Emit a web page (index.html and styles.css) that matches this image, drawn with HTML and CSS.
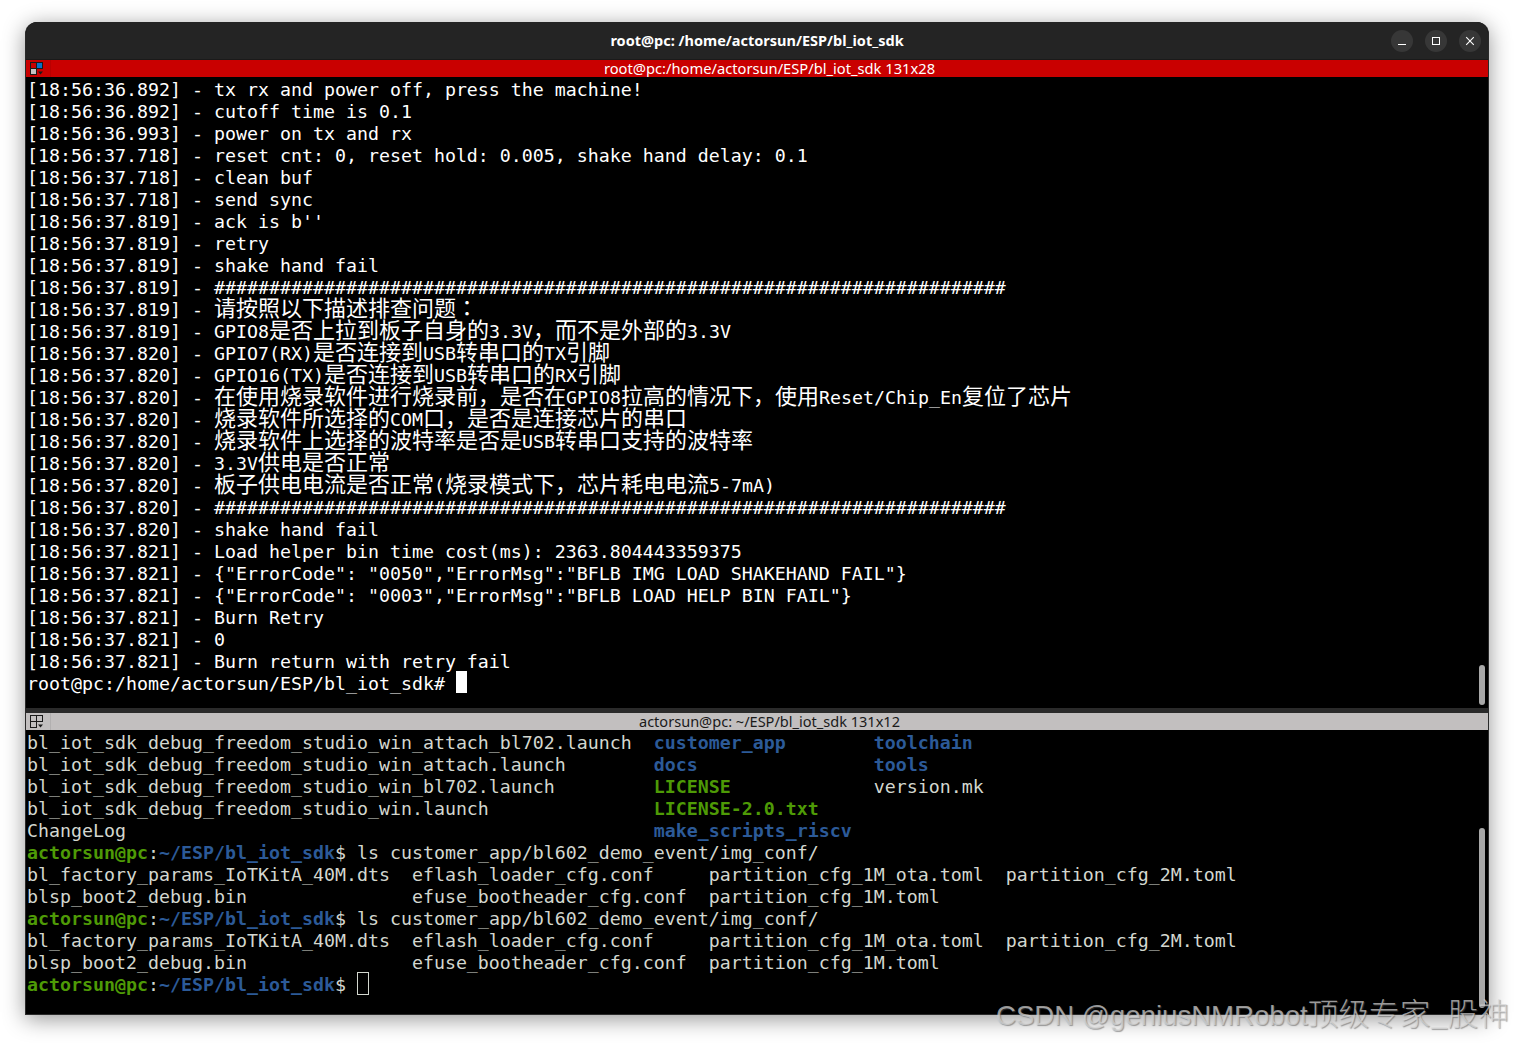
FILE: index.html
```html
<!DOCTYPE html>
<html lang="en">
<head>
<meta charset="utf-8">
<title>root@pc: /home/actorsun/ESP/bl_iot_sdk</title>
<link rel="stylesheet" href="styles.css">
</head>
<body>
<main class="window">
  <header class="titlebar">
    <span></span>
    <h1 class="title">root@pc: /home/actorsun/ESP/bl_iot_sdk</h1>
    <div class="controls">
      <button class="ctl" aria-label="Minimize"><svg width="10" height="10" viewBox="0 0 10 10"><path d="M1 8.5h8" stroke="#fff" stroke-width="1"/></svg></button>
      <button class="ctl" aria-label="Maximize"><svg width="10" height="10" viewBox="0 0 10 10"><rect x="1.5" y="1.5" width="7" height="7" fill="none" stroke="#fff" stroke-width="1"/></svg></button>
      <button class="ctl" aria-label="Close"><svg width="10" height="10" viewBox="0 0 10 10"><path d="M1.2 1.2l7.6 7.6M8.8 1.2l-7.6 7.6" stroke="#fff" stroke-width="1.1"/></svg></button>
    </div>
  </header>

  <div class="panebar panebar-active">
    <span class="pane-icon"><svg width="14" height="14" viewBox="0 0 14 14"><rect x=".5" y=".5" width="6" height="6" fill="#c90000" stroke="#1a1a1a"/><rect x="6.5" y=".5" width="6" height="6" fill="#0a70c8" stroke="#1a1a1a"/><rect x=".5" y="6.5" width="6" height="6" fill="#c4c2c2" stroke="#1a1a1a"/><path d="M8 9.5h5l-2.5 3z" fill="#1a1a1a"/></svg></span>
    <span class="pane-title">root@pc:/home/actorsun/ESP/bl_iot_sdk 131x28</span>
  </div>
  <section class="pane pane-top">
    <div class="line">[18:56:36.892] - tx rx and power off, press the machine!</div>
    <div class="line">[18:56:36.892] - cutoff time is 0.1</div>
    <div class="line">[18:56:36.993] - power on tx and rx</div>
    <div class="line">[18:56:37.718] - reset cnt: 0, reset hold: 0.005, shake hand delay: 0.1</div>
    <div class="line">[18:56:37.718] - clean buf</div>
    <div class="line">[18:56:37.718] - send sync</div>
    <div class="line">[18:56:37.819] - ack is b''</div>
    <div class="line">[18:56:37.819] - retry</div>
    <div class="line">[18:56:37.819] - shake hand fail</div>
    <div class="line">[18:56:37.819] - ########################################################################</div>
    <div class="line">[18:56:37.819] - <span class="cjk">请按照以下描述排查问题</span><span class="cjk cjk-tc">：</span></div>
    <div class="line">[18:56:37.819] - GPIO8<span class="cjk">是否上拉到板子自身的</span>3.3V<span class="cjk">，而不是外部的</span>3.3V</div>
    <div class="line">[18:56:37.820] - GPIO7(RX)<span class="cjk">是否连接到</span>USB<span class="cjk">转串口的</span>TX<span class="cjk">引脚</span></div>
    <div class="line">[18:56:37.820] - GPIO16(TX)<span class="cjk">是否连接到</span>USB<span class="cjk">转串口的</span>RX<span class="cjk">引脚</span></div>
    <div class="line">[18:56:37.820] - <span class="cjk">在使用烧录软件进行烧录前，是否在</span>GPIO8<span class="cjk">拉高的情况下，使用</span>Reset/Chip_En<span class="cjk">复位了芯片</span></div>
    <div class="line">[18:56:37.820] - <span class="cjk">烧录软件所选择的</span>COM<span class="cjk">口，是否是连接芯片的串口</span></div>
    <div class="line">[18:56:37.820] - <span class="cjk">烧录软件上选择的波特率是否是</span>USB<span class="cjk">转串口支持的波特率</span></div>
    <div class="line">[18:56:37.820] - 3.3V<span class="cjk">供电是否正常</span></div>
    <div class="line">[18:56:37.820] - <span class="cjk">板子供电电流是否正常</span>(<span class="cjk">烧录模式下，芯片耗电电流</span>5-7mA)</div>
    <div class="line">[18:56:37.820] - ########################################################################</div>
    <div class="line">[18:56:37.820] - shake hand fail</div>
    <div class="line">[18:56:37.821] - Load helper bin time cost(ms): 2363.804443359375</div>
    <div class="line">[18:56:37.821] - {"ErrorCode": "0050","ErrorMsg":"BFLB IMG LOAD SHAKEHAND FAIL"}</div>
    <div class="line">[18:56:37.821] - {"ErrorCode": "0003","ErrorMsg":"BFLB LOAD HELP BIN FAIL"}</div>
    <div class="line">[18:56:37.821] - Burn Retry</div>
    <div class="line">[18:56:37.821] - 0</div>
    <div class="line">[18:56:37.821] - Burn return with retry fail</div>
    <div class="line">root@pc:/home/actorsun/ESP/bl_iot_sdk# <span class="cursor-solid"></span></div>
    <div class="thumb thumb-top"></div>
  </section>
  <div class="divider"></div>

  <div class="panebar panebar-idle">
    <span class="pane-icon"><svg width="14" height="14" viewBox="0 0 14 14"><rect x=".5" y=".5" width="6" height="6" fill="none" stroke="#1a1a1a"/><rect x="6.5" y=".5" width="6" height="6" fill="none" stroke="#1a1a1a"/><rect x=".5" y="6.5" width="6" height="6" fill="none" stroke="#1a1a1a"/><path d="M8 9.5h5l-2.5 3z" fill="#1a1a1a"/></svg></span>
    <span class="pane-title pane-title-idle">actorsun@pc: ~/ESP/bl_iot_sdk 131x12</span>
  </div>
  <section class="pane pane-bottom">
    <div class="line">bl_iot_sdk_debug_freedom_studio_win_attach_bl702.launch  <b class="dir">customer_app</b>        <b class="dir">toolchain</b></div>
    <div class="line">bl_iot_sdk_debug_freedom_studio_win_attach.launch        <b class="dir">docs</b>                <b class="dir">tools</b></div>
    <div class="line">bl_iot_sdk_debug_freedom_studio_win_bl702.launch         <b class="exe">LICENSE</b>             version.mk</div>
    <div class="line">bl_iot_sdk_debug_freedom_studio_win.launch               <b class="exe">LICENSE-2.0.txt</b></div>
    <div class="line">ChangeLog                                                <b class="dir">make_scripts_riscv</b></div>
    <div class="line"><b class="exe">actorsun@pc</b>:<b class="dir">~/ESP/bl_iot_sdk</b>$ ls customer_app/bl602_demo_event/img_conf/</div>
    <div class="line">bl_factory_params_IoTKitA_40M.dts  eflash_loader_cfg.conf     partition_cfg_1M_ota.toml  partition_cfg_2M.toml</div>
    <div class="line">blsp_boot2_debug.bin               efuse_bootheader_cfg.conf  partition_cfg_1M.toml</div>
    <div class="line"><b class="exe">actorsun@pc</b>:<b class="dir">~/ESP/bl_iot_sdk</b>$ ls customer_app/bl602_demo_event/img_conf/</div>
    <div class="line">bl_factory_params_IoTKitA_40M.dts  eflash_loader_cfg.conf     partition_cfg_1M_ota.toml  partition_cfg_2M.toml</div>
    <div class="line">blsp_boot2_debug.bin               efuse_bootheader_cfg.conf  partition_cfg_1M.toml</div>
    <div class="line"><b class="exe">actorsun@pc</b>:<b class="dir">~/ESP/bl_iot_sdk</b>$ <span class="cursor-hollow"></span></div>
    <div class="thumb thumb-bottom"></div>
  </section>
</main>
<div class="watermark">CSDN @geniusNMRobot<span class="watermark-cjk">顶级专家_股神</span></div>
</body>
</html>
```
FILE: styles.css
```css
* { box-sizing: border-box; }
html, body { margin: 0; height: 100%; background: #fff; overflow: hidden; }
body { padding: 22px 25px 0; position: relative; }

.window {
  width: 1464px;
  height: 993px;
  display: flex;
  flex-direction: column;
  background: #000;
  border: 1px solid #2a2a2a;
  border-top: 0;
  border-radius: 12px 12px 0 0;
  box-shadow: 0 4px 22px rgba(0, 0, 0, .42);
  overflow: hidden;
}

.titlebar {
  height: 38px;
  flex: none;
  display: grid;
  grid-template-columns: 1fr auto 1fr;
  align-items: center;
  background: #242424;
  border-bottom: 1px solid #1a1a1a;
  color: #fff;
}
.title {
  margin: 0;
  font: 700 14.5px/1 "Noto Sans", sans-serif;
}
.controls {
  display: flex;
  justify-content: flex-end;
  gap: 12px;
  padding-right: 7px;
}
.ctl {
  width: 22px;
  height: 22px;
  padding: 0;
  border: 0;
  border-radius: 50%;
  background: #373737;
  display: flex;
  align-items: center;
  justify-content: center;
}

.panebar {
  height: 17px;
  flex: none;
  display: flex;
  align-items: center;
  font: 400 14.7px/17px "Noto Sans", sans-serif;
}
.panebar-active { background: #c90000; color: #fff; }
.panebar-idle { background: #c2bfbf; color: #1a1a1a; }
.pane-icon {
  width: 25px;
  height: 17px;
  flex: none;
  display: flex;
  align-items: center;
  padding-left: 4px;
  border-right: 1px solid rgba(0, 0, 0, .08);
}
.pane-icon svg { display: block; }
.pane-title { flex: 1; text-align: center; }
.pane-title-idle { font-size: 14.55px; }

.pane {
  position: relative;
  background: #000;
  padding-left: 1px;
  font: 400 18.27px/22px "DejaVu Sans Mono", monospace;
}
.pane-top { height: 631px; flex: none; color: #fff; }
.pane-bottom { flex: 1; color: #d3d7cf; }
.line { height: 22px; line-height: 26px; white-space: pre; }
.cjk {
  font-family: "Noto Sans CJK SC", sans-serif;
  font-size: 22px;
  font-weight: 400;
  line-height: 0;
}
.cjk-tc { font-family: "Noto Sans CJK TC", sans-serif; }
.dir { color: #2c5a98; font-weight: 700; }
.exe { color: #4e9a06; font-weight: 700; }

.cursor-solid, .cursor-hollow {
  display: inline-block;
  width: 11px;
  height: 22px;
  vertical-align: top;
}
.cursor-solid { background: #fff; }
.cursor-hollow { width: 12px; height: 23px; border: 1px solid #d3d7cf; }

.divider { height: 5px; flex: none; background: #2a2a2a; }

.thumb {
  position: absolute;
  right: 3px;
  width: 6px;
  border-radius: 3px;
  background: #a8a8a8;
}
.thumb-top { top: 588px; height: 40px; }
.thumb-bottom { top: 98px; bottom: 6px; }

.watermark {
  position: absolute;
  left: 996px;
  top: 994px;
  font: 400 27.6px/36px "Liberation Sans", sans-serif;
  white-space: nowrap;
  color: rgba(215, 215, 215, .7);
  text-shadow: 1px 1px 1px rgba(90, 90, 90, .55);
}
.watermark-cjk { font-family: "Noto Sans CJK SC", sans-serif; font-size: 30.7px; font-weight: 300; }
```
